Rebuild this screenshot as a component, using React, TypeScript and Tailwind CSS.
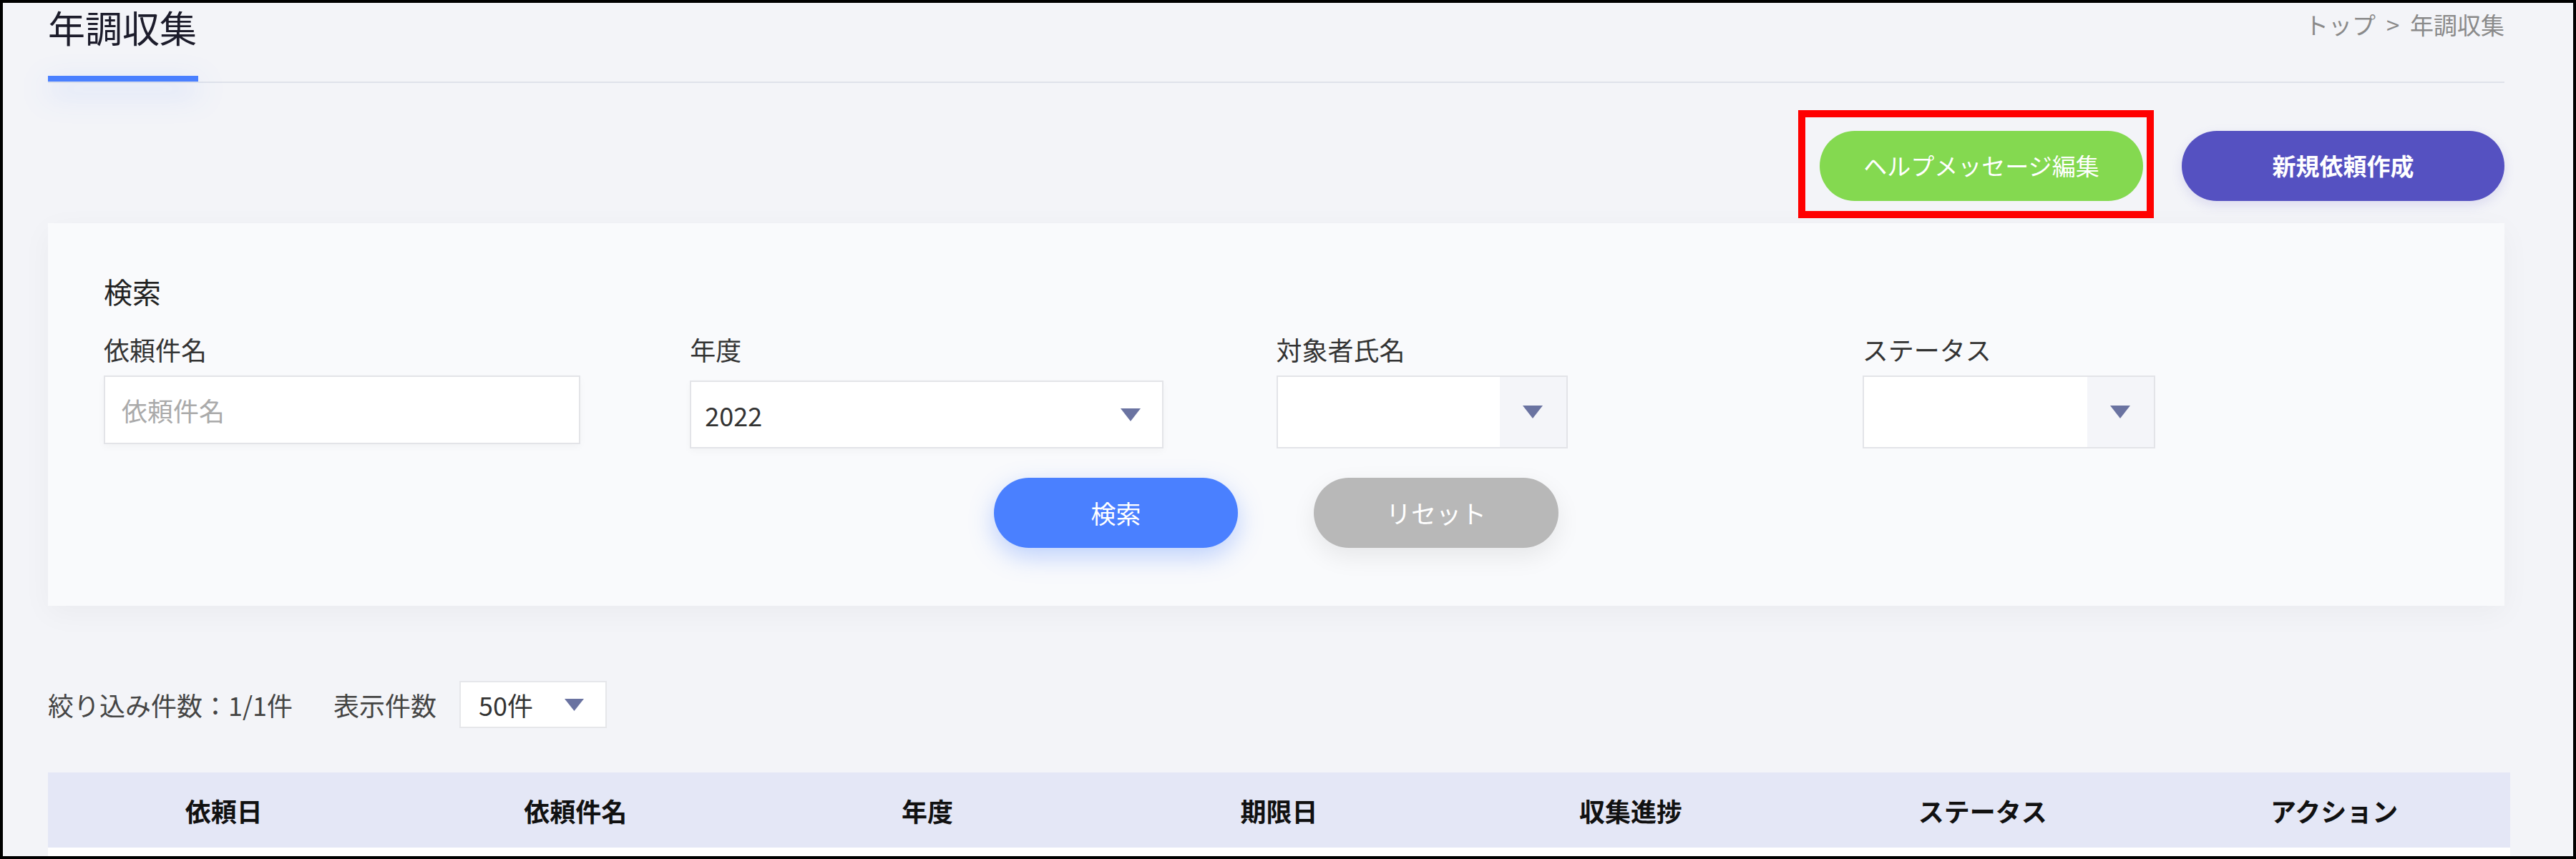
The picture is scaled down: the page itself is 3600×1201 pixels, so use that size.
import React from 'react';

// Simple down arrow used by the selects
const Caret = ({ w = 28, h = 18 }: { w?: number; h?: number }) => (
    <svg width={w} height={h} viewBox={`0 0 ${w} ${h}`}>
        <polygon points={`0,0 ${w},0 ${w / 2},${h}`} fill="#6a73a1" />
    </svg>
);

const columns = ['依頼日', '依頼件名', '年度', '期限日', '収集進捗', 'ステータス', 'アクション'];

export default function App() {
    return (
        <div className="h-[1201px] w-[3600px] overflow-hidden border-4 border-black bg-[#f3f4f8] font-['Noto_Sans_CJK_JP','Noto_Sans',sans-serif] text-[#333]">
            <div className="pl-[63px] pr-[96px]">
                {/* Page header */}
                <div className="flex items-start justify-between border-b-2 border-[#dfe2ea]">
                    <div className="w-[210px]">
                        <h1 className="pt-[4px] text-[52px] leading-[60px] text-[#1c1c2b] whitespace-nowrap">年調収集</h1>
                        <div className="mt-[38px] h-[8px] w-[210px] bg-[#4a80ff] shadow-[0_14px_40px_rgba(74,128,255,0.35)]" />
                    </div>
                    <div className="pt-[10px] text-[33px] leading-[40px] text-[#8a8a8a] whitespace-nowrap">
                        トップ &nbsp;&gt;&nbsp; 年調収集
                    </div>
                </div>

                {/* Action buttons */}
                <div className="mt-[67px] flex justify-end gap-[54px]">
                    <div className="relative">
                        <button className="h-[98px] w-[452px] rounded-full bg-[#84d950] text-[33px] text-white">
                            ヘルプメッセージ編集
                        </button>
                        <div className="pointer-events-none absolute -top-[29px] -bottom-[24px] -left-[30px] -right-[15px] border-[10px] border-[#ff0000]" />
                    </div>
                    <button className="h-[98px] w-[451px] rounded-full bg-[#5551c1] text-[33px] font-bold text-white shadow-[0_6px_16px_rgba(85,81,193,0.15)]">
                        新規依頼作成
                    </button>
                </div>

                {/* Search panel */}
                <div className="mt-[31px] h-[535px] bg-[#f9fafc] px-[78px] pt-[71px] shadow-[0_10px_40px_rgba(0,0,0,0.04)]">
                    <h2 className="text-[40px] leading-[48px] text-[#222]">検索</h2>
                    <div className="mt-[35px] grid grid-cols-4">
                        <div>
                            <label className="block text-[36px] leading-[44px]">依頼件名</label>
                            <div className="mt-[15px] flex h-[96px] w-[666px] items-center border-2 border-[#e3e4e8] bg-white pl-[23px] text-[36px] text-[#aaa] shadow-[0_4px_10px_rgba(0,0,0,0.03)]">
                                依頼件名
                            </div>
                        </div>
                        <div>
                            <label className="block text-[36px] leading-[44px]">年度</label>
                            <div className="mt-[22px] flex h-[95px] w-[662px] items-center justify-between border-2 border-[#e3e4e8] bg-white pl-[19px] pr-[30px] text-[36px] text-[#333] shadow-[0_4px_10px_rgba(0,0,0,0.03)]">
                                <span>2022</span>
                                <Caret />
                            </div>
                        </div>
                        <div>
                            <label className="block text-[36px] leading-[44px]">対象者氏名</label>
                            <div className="mt-[15px] flex h-[102px] w-[407px] border-2 border-[#e3e4e8] bg-white">
                                <div className="flex-1" />
                                <div className="flex w-[93px] items-center justify-center bg-[#f4f5f9]">
                                    <Caret />
                                </div>
                            </div>
                        </div>
                        <div>
                            <label className="block text-[36px] leading-[44px]">ステータス</label>
                            <div className="mt-[15px] flex h-[102px] w-[409px] border-2 border-[#e3e4e8] bg-white">
                                <div className="flex-1" />
                                <div className="flex w-[93px] items-center justify-center bg-[#f4f5f9]">
                                    <Caret />
                                </div>
                            </div>
                        </div>
                    </div>
                    <div className="mt-[41px] flex justify-center gap-[106px]">
                        <button className="h-[98px] w-[341px] rounded-full bg-[#4a80ff] text-[35px] text-white shadow-[0_12px_34px_rgba(74,128,255,0.35)]">
                            検索
                        </button>
                        <button className="h-[98px] w-[342px] rounded-full bg-[#b8b8b8] text-[35px] text-white shadow-[0_12px_34px_rgba(0,0,0,0.08)]">
                            リセット
                        </button>
                    </div>
                </div>

                {/* Result count */}
                <div className="mt-[105px] flex h-[66px] items-center text-[36px] text-[#444]">
                    <span>絞り込み件数：1/1件</span>
                    <span className="ml-[57px]">表示件数</span>
                    <div className="ml-[32px] flex h-[66px] w-[206px] items-center justify-between border-2 border-[#e6e7ea] bg-white pl-[25px] pr-[30px] text-[36px] text-[#333]">
                        <span>50件</span>
                        <Caret w={27} h={17} />
                    </div>
                </div>

                {/* Table */}
                <div className="mt-[62px] w-[3441px]">
                    <div className="grid h-[105px] grid-cols-7 items-center bg-[#e4e7f6]">
                        {columns.map(c => (
                            <div key={c} className="text-center text-[36px] font-bold text-[#111]">
                                {c}
                            </div>
                        ))}
                    </div>
                    <div className="h-[40px] bg-white" />
                </div>
            </div>
        </div>
    );
}
